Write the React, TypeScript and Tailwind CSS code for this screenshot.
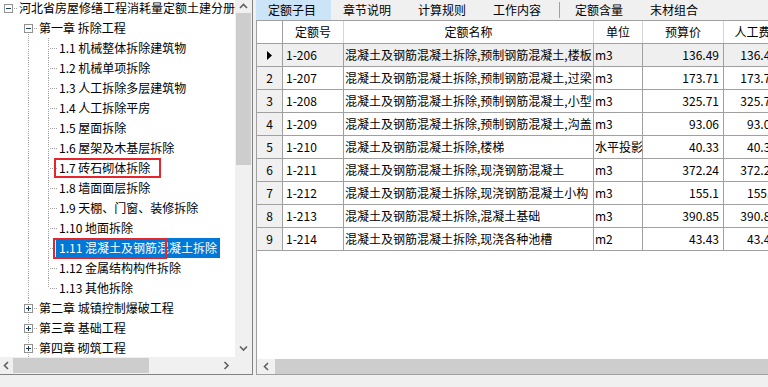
import React from "react";

const FONT = "font-['Noto_Sans_CJK_SC','Noto_Sans',sans-serif]";

type Col = { box?: "-" | "+"; up?: boolean; down?: boolean; right?: boolean };

// one 20x20 cell of the tree's dotted connector lines
function Connector({ c }: { c?: Col }) {
  const dots: React.ReactElement[] = [];
  if (c) {
    const top = c.box ? 5 : 10;
    const bottom = c.box ? 15 : 10;
    if (c.up) for (let y = 0; y < top; y += 2) dots.push(<rect key={"u" + y} x={10} y={y} width={1} height={1} />);
    if (c.down) for (let y = bottom + 1; y < 20; y += 2) dots.push(<rect key={"d" + y} x={10} y={y} width={1} height={1} />);
    if (c.right) for (let x = c.box ? 16 : 12; x < 20; x += 2) dots.push(<rect key={"r" + x} x={x} y={10} width={1} height={1} />);
  }
  return (
    <svg width="20" height="20" className="shrink-0">
      <g fill="#a0a0a0">{dots}</g>
      {c?.box && (
        <g>
          <rect x="6.5" y="6.5" width="8" height="8" fill="#fff" stroke="#919191" />
          <rect x="8" y="10" width="5" height="1" fill="#1c3a5e" />
          {c.box === "+" && <rect x="10" y="8" width="1" height="5" fill="#1c3a5e" />}
        </g>
      )}
    </svg>
  );
}

type TreeRow = { cols: (Col | undefined)[]; label: string; selected?: boolean };

const items = [
  "1.1 机械整体拆除建筑物",
  "1.2 机械单项拆除",
  "1.3 人工拆除多层建筑物",
  "1.4 人工拆除平房",
  "1.5 屋面拆除",
  "1.6 屋架及木基层拆除",
  "1.7 砖石砌体拆除",
  "1.8 墙面面层拆除",
  "1.9 天棚、门窗、装修拆除",
  "1.10 地面拆除",
  "1.11 混凝土及钢筋混凝土拆除",
  "1.12 金属结构构件拆除",
  "1.13 其他拆除",
];

const treeRows: TreeRow[] = [
  { cols: [{ box: "-", right: true }], label: "河北省房屋修缮工程消耗量定额土建分册" },
  { cols: [undefined, { box: "-", down: true, right: true }], label: "第一章 拆除工程" },
  ...items.map((label, i) => ({
    cols: [undefined, { up: true, down: true }, { up: true, down: i < items.length - 1, right: true }],
    label,
    selected: i === 10,
  })),
  { cols: [undefined, { box: "+", up: true, down: true, right: true }], label: "第二章 城镇控制爆破工程" },
  { cols: [undefined, { box: "+", up: true, down: true, right: true }], label: "第三章 基础工程" },
  { cols: [undefined, { box: "+", up: true, down: true, right: true }], label: "第四章 砌筑工程" },
  { cols: [undefined, { up: true, down: true }], label: "" },
];

function Chevron({ dir }: { dir: "up" | "down" | "left" | "right" }) {
  const d = {
    up: "M1 5 L4.5 1.5 L8 5",
    down: "M1 1.5 L4.5 5 L8 1.5",
    left: "M5 1 L1.5 4.5 L5 8",
    right: "M1.5 1 L5 4.5 L1.5 8",
  }[dir];
  const horiz = dir === "up" || dir === "down";
  return (
    <svg width={horiz ? 9 : 7} height={horiz ? 7 : 9}>
      <path d={d} fill="none" stroke="#606060" strokeWidth="1.6" />
    </svg>
  );
}

function Tree() {
  return (
    <div className="relative h-[357px] w-[235px] overflow-hidden bg-white">
      <div className="-ml-[2px] -mt-[2px] flex flex-col">
        {treeRows.map((r, i) => (
          <div key={i} className="flex h-[20px] items-center whitespace-nowrap">
            {r.cols.map((c, j) => (
              <Connector key={j} c={c} />
            ))}
            {r.label && (
              <span
                className={`-ml-[2px] h-[20px] px-[3px] text-[12px] leading-[20px] ${
                  r.selected ? "bg-[#0078d7] text-white" : "text-black"
                }`}
              >
                {r.label}
              </span>
            )}
          </div>
        ))}
      </div>
      {/* red annotation boxes */}
      <div className="absolute left-[54px] top-[158px] h-[20px] w-[107px] border-2 border-[#e5262a]" />
      <div className="absolute left-[53px] top-[238px] h-[21px] w-[114px] border-2 border-[#e5262a]" />
    </div>
  );
}

function LeftPane() {
  return (
    <div className="flex h-[375px] w-[253px] flex-col border-b border-r border-[#828282]">
      <div className="flex">
        <Tree />
        <div className="flex h-[357px] w-[17px] flex-col bg-[#f0f0f0]">
          <div className="flex h-[13px] items-center justify-center">
            <Chevron dir="up" />
          </div>
          <div className="ml-[1px] h-[152px] w-[15px] bg-[#cdcdcd]" />
          <div className="flex-1" />
          <div className="flex h-[17px] items-center justify-center">
            <Chevron dir="down" />
          </div>
        </div>
      </div>
      <div className="flex h-[17px] bg-[#f0f0f0]">
        <div className="flex w-[13px] items-center justify-center">
          <Chevron dir="left" />
        </div>
        <div className="my-[1px] w-[136px] bg-[#cdcdcd]" />
        <div className="flex-1" />
        <div className="flex w-[17px] items-center justify-center">
          <Chevron dir="right" />
        </div>
        <div className="w-[17px]" />
      </div>
    </div>
  );
}

const tabs = ["定额子目", "章节说明", "计算规则", "工作内容"];
const tabs2 = ["定额含量", "末材组合"];

const rows = [
  ["1-206", "混凝土及钢筋混凝土拆除,预制钢筋混凝土,楼板", "m3", "136.49"],
  ["1-207", "混凝土及钢筋混凝土拆除,预制钢筋混凝土,过梁", "m3", "173.71"],
  ["1-208", "混凝土及钢筋混凝土拆除,预制钢筋混凝土,小型", "m3", "325.71"],
  ["1-209", "混凝土及钢筋混凝土拆除,预制钢筋混凝土,沟盖", "m3", "93.06"],
  ["1-210", "混凝土及钢筋混凝土拆除,楼梯", "水平投影", "40.33"],
  ["1-211", "混凝土及钢筋混凝土拆除,现浇钢筋混凝土", "m3", "372.24"],
  ["1-212", "混凝土及钢筋混凝土拆除,现浇钢筋混凝土小构", "m3", "155.1"],
  ["1-213", "混凝土及钢筋混凝土拆除,混凝土基础", "m3", "390.85"],
  ["1-214", "混凝土及钢筋混凝土拆除,现浇各种池槽", "m2", "43.43"],
];

function Grid() {
  return (
    <div className="flex flex-1 flex-col border-l border-t border-b border-[#a0a0a0] bg-white">
      <div className="flex-1 overflow-hidden">
        <div className="flex h-[23px] border-b border-[#a0a0a0] text-[12px] leading-[22px] whitespace-nowrap">
          <div className="w-[26px] shrink-0 border-r border-[#a0a0a0]" />
          <div className="w-[61px] shrink-0 border-r border-[#d5d5d5] text-center">定额号</div>
          <div className="w-[250px] shrink-0 border-r border-[#d5d5d5] text-center">定额名称</div>
          <div className="w-[49px] shrink-0 border-r border-[#d5d5d5] text-center">单位</div>
          <div className="w-[81px] shrink-0 border-r border-[#d5d5d5] text-center">预算价</div>
          <div className="w-[58px] shrink-0 border-r border-[#d5d5d5] text-center">人工费</div>
        </div>
        {rows.map((r, i) => (
          <div
            key={r[0]}
            className={`flex h-[23px] border-b border-[#a0a0a0] text-[12px] leading-[22px] whitespace-nowrap ${
              i === 0 ? "bg-[#efefef]" : ""
            }`}
          >
            <div className="flex w-[26px] shrink-0 items-center justify-center border-r border-[#a0a0a0] bg-[#f0f0f0]">
              {i === 0 ? (
                <svg width="5" height="9">
                  <path d="M0 0 L5 4.5 L0 9 Z" fill="#000" />
                </svg>
              ) : (
                i + 1
              )}
            </div>
            <div className="w-[61px] shrink-0 overflow-hidden border-r border-[#a0a0a0] pl-[3px]">{r[0]}</div>
            <div className="w-[250px] shrink-0 overflow-hidden border-r border-[#a0a0a0] pl-[1px]">{r[1]}</div>
            <div className="w-[49px] shrink-0 overflow-hidden border-r border-[#a0a0a0] pl-[1px]">{r[2]}</div>
            <div className="w-[81px] shrink-0 overflow-hidden border-r border-[#a0a0a0] pr-[4px] text-right">{r[3]}</div>
            <div className="w-[58px] shrink-0 overflow-hidden border-r border-[#a0a0a0] pr-[4px] text-right">{r[3]}</div>
          </div>
        ))}
      </div>
      <div className="flex h-[15px] bg-[#f0f0f0]">
        <div className="flex w-[18px] items-center justify-center">
          <Chevron dir="left" />
        </div>
        <div className="flex-1 bg-[#cdcdcd]" />
      </div>
    </div>
  );
}

function RightPane() {
  return (
    <div className="flex h-[375px] flex-1 flex-col overflow-hidden">
      <div className="flex h-[20px] text-[12px] leading-[20px] text-black whitespace-nowrap">
        {tabs.map((t, i) => (
          <div key={t} className={`w-[75px] shrink-0 pl-[12px] ${i === 0 ? "bg-[#cce4f7]" : ""}`}>
            {t}
          </div>
        ))}
        <div className="flex w-[7px] shrink-0 justify-center py-[2px]">
          <div className="w-px bg-[#a0a0a0]" />
        </div>
        {tabs2.map((t) => (
          <div key={t} className="w-[75px] shrink-0 pl-[12px]">
            {t}
          </div>
        ))}
      </div>
      <Grid />
    </div>
  );
}

export default function App() {
  return (
    <div className={`h-[387px] w-[768px] overflow-hidden bg-[#f0f0f0] ${FONT}`}>
      <div className="flex gap-[3px]">
        <LeftPane />
        <RightPane />
      </div>
    </div>
  );
}
